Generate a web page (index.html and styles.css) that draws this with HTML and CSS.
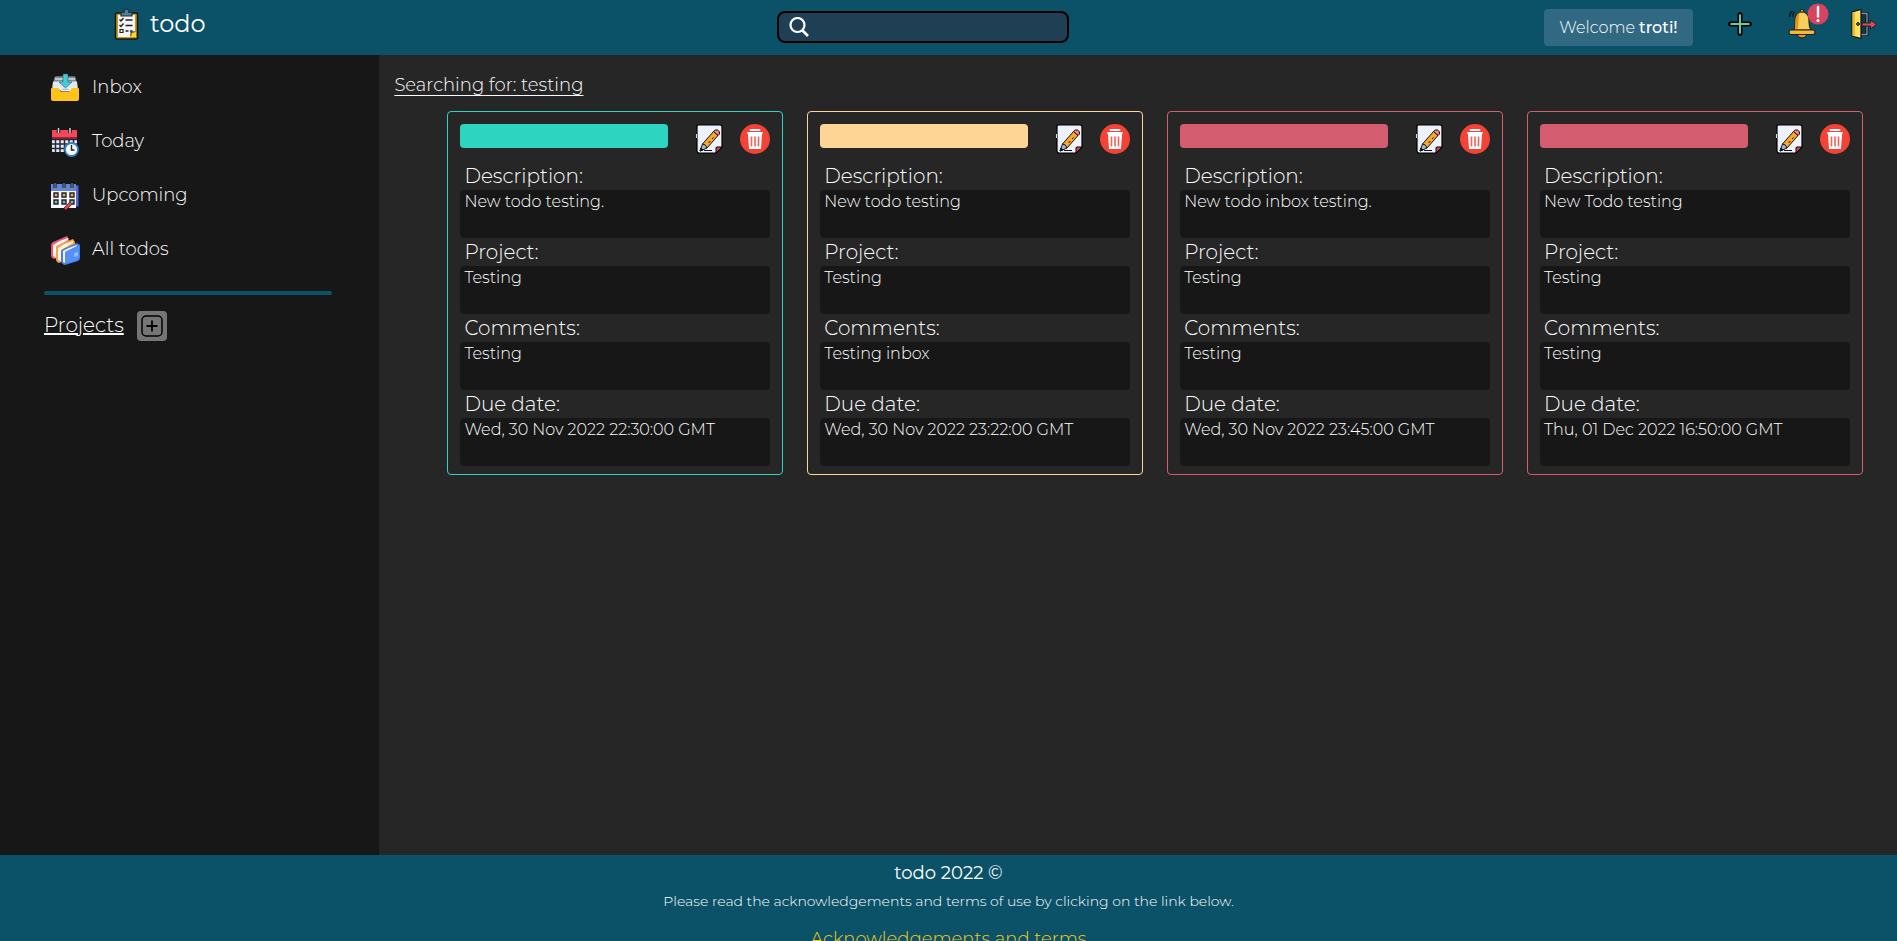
FILE: index.html
```html
<!DOCTYPE html>
<html lang="en">
<head>
<meta charset="utf-8">
<meta name="viewport" content="width=device-width, initial-scale=1">
<title>todo</title>
<link rel="stylesheet" href="styles.css">
</head>
<body>
<svg class="sprite" aria-hidden="true">
  <symbol id="edit" viewBox="0 0 30 30">
    <path d="M4 1h22q2 0 2 2v20l-6 6H5q-2 0-2-2V2z" fill="#edf2fb" stroke="#000" stroke-width="1.2"/>
    <path d="M22 29v-5q0-1 1-1h5z" fill="#d9455f" stroke="#000" stroke-width="1"/>
    <path d="M2.500 10v4" stroke="#d5d5d5"/>
    <path d="M8.500 20L19.500 7.500l4.500 4L13 24z" fill="#f9a72b" stroke="#111" stroke-width="1"/>
    <path d="M19.500 7.500q2-2.500 4-1.500 3 1.500 2 4L24 11.500z" fill="#fb7f85" stroke="#111" stroke-width="1"/>
    <path d="M8.500 20l-2.500 7 7-3q-1-4-4.500-4z" fill="#a9b4c6" stroke="#111" stroke-width="1"/>
    <path d="M6 27l1-3 2 2z" fill="#111" stroke="#111"/>
    <path d="M10 26.500h8M14.500 19l2-2M18 15l1.500-1.500" stroke="#111" stroke-width="1"/>
  </symbol>
  <symbol id="trash" viewBox="0 0 30 30">
    <circle cx="15" cy="15" r="15" fill="#f44336"/>
    <path d="M10.500 6h9M8 9h14" stroke="#fff" stroke-width="1.800" stroke-linecap="round"/>
    <path d="M8 10h14l-1 15H9z" fill="#fff"/>
    <path d="M11.500 12.500v10M15 12.500v10M18.500 12.500v10" stroke="#f1665c" stroke-width="1.600"/>
  </symbol>
</svg>

<header class="topbar">
  <a class="brand" href="#">
    <svg width="26" height="32" viewBox="0 0 26 32" aria-hidden="true">
      <rect x="1.500" y="5" width="22" height="26" rx="1.500" fill="#c99712" stroke="#161616" stroke-width="1.500"/>
      <path d="M4 7h17v16l-5 6H4z" fill="#f5f5f8"/>
      <path d="M17 29v-5h5z" fill="#ffd52b" stroke="#222"/>
      <path d="M16 29h6v-6z" fill="#ffd52b"/>
      <path d="M7 8V4.500h3Q10 1 12.500 1T15 4.500h3V8z" fill="#557b97" stroke="#1d2f3d" stroke-width="1.200"/>
      <path d="M5.500 11.500l1.500 1.500 2.500-3M11.500 12h7M5.500 17l1.500 1.500 2.500-3M11.500 17.500h7M11.500 23h3M16 23h2.500" fill="none" stroke="#222" stroke-width="1.400"/>
      <path d="M6 21.500h3v3H6z" fill="none" stroke="#222" stroke-width="1.200"/>
    </svg>
    <span>todo</span>
  </a>
  <form class="search" role="search">
    <svg width="20" height="20" viewBox="0 0 20 20" aria-hidden="true"><circle cx="8.500" cy="8" r="7" fill="none" stroke="#fff" stroke-width="2.200"/><path d="M13 13l6 6" stroke="#fff" stroke-width="2.600"/></svg>
    <input type="search" aria-label="Search todos">
  </form>
  <nav class="actions" aria-label="Account">
    <button class="welcome" type="button">Welcome <b>troti!</b></button>
    <button class="icon-button add" type="button" aria-label="Add todo">
      <svg width="24" height="24" viewBox="0 0 24 24"><path d="M12 2.500v19M2.500 12h19" stroke="#000" stroke-width="5" stroke-linecap="round"/><path d="M12 2.500v19M2.500 12h19" stroke="#69cba5" stroke-width="2"/></svg>
    </button>
    <button class="icon-button bell" type="button" aria-label="Notifications">
      <svg width="30" height="30" viewBox="0 0 30 30">
        <path d="M9 26q5 6 10 0" fill="#e99a18" stroke="#222"/>
        <path d="M6 21Q7 18 7 11q0-7 7-8.500 7 1.500 7 8.500 0 7 2 10z" fill="#f8cf5b" stroke="#222" stroke-width="1.200"/>
        <path d="M6.800 20.500Q7.500 17 7.500 11q0-5 4-7.500-1 5-1 9 0 5-1 8z" fill="#e8950f"/>
        <circle cx="14" cy="1.800" r="1.500" fill="#f2a51a" stroke="#222"/>
        <rect x="1" y="21" width="26" height="4.500" rx="2" fill="#f5b838" stroke="#222" stroke-width="1.200"/>
        <path d="M1.500 8q0-4 3-6M4.500 8q0-3 2-5" fill="none" stroke="#111" stroke-width="1.200"/>
      </svg>
      <span class="badge"><svg width="22" height="22" viewBox="0 0 22 22"><circle cx="11" cy="11" r="10.500" fill="#d9435f"/><path d="M11 4v9.500" stroke="#fff" stroke-width="2.400" stroke-linecap="round"/><circle cx="11" cy="17.500" r="1.500" fill="#fff"/></svg></span>
    </button>
    <button class="icon-button" type="button" aria-label="Log out">
      <svg width="28" height="30" viewBox="0 0 28 30">
        <path d="M11 4.500h6v21h-6" fill="#0a3948" stroke="#111" stroke-width="3"/>
        <path d="M11 4.500h6v21h-6" fill="none" stroke="#8794a8" stroke-width="1.300"/>
        <path d="M2 3l9-2.500v29L2 27z" fill="#ffe264" stroke="#111" stroke-width="1.200"/>
        <path d="M2.500 3.500L5 3v24.500l-2.500-.8z" fill="#edb92f"/>
        <circle cx="8" cy="15" r="1.400" fill="#777" stroke="#111"/>
        <path d="M12 14h8.500v-3l6 4.500-6 4.500v-3H12z" fill="#df4964" stroke="#222"/>
      </svg>
    </button>
  </nav>
</header>

<div class="workspace">
  <aside class="sidebar">
    <nav class="filters" aria-label="Filters">
      <a href="#">
        <svg width="30" height="30" viewBox="0 0 30 30" aria-hidden="true">
          <path d="M4 5q0-2 2-2h18q2 0 2 2l1 6H3z" fill="#7e8b95" stroke="#111" stroke-width=".6"/>
          <path d="M3 8.500h24l1 8H2z" fill="#dfe8ef"/><path d="M5 6h20" stroke="#fff"/>
          <path d="M2 15h7l2 4h8l2-4h7q1 0 1 1v10q0 2-2 2H3q-2 0-2-2V16q0-1 1-1z" fill="#ffc31a"/>
          <path d="M9 14l3 3.500h7l2-3" fill="none" stroke="#e9f1f6" stroke-width="2"/>
          <path d="M13 1h5v8h4l-6.500 6L9 9h4z" fill="#45cbdb" stroke="#154955" stroke-width=".5"/>
        </svg>
        <span>Inbox</span></a>
      <a href="#">
        <svg width="30" height="30" viewBox="0 0 30 30" aria-hidden="true">
          <rect x="2" y="3" width="25" height="22" rx="1" fill="#e8edf5"/>
          <path d="M2 11h25" stroke="#a32131" stroke-width="2"/><path d="M2 3h25v7H2z" fill="#f4485a"/>
          <path d="M2 12.500h25M2 17h25M2 21.500h25M5.500 12v13M10 12v13M14.500 12v13M19 12v10M23.500 12v6" stroke="#26263c" stroke-width="1.500"/>
          <path d="M8.500 1v5M20 1v5" stroke="#111" stroke-width="3.500"/><path d="M8.500 1v5M20 1v5" stroke="#ccd5df" stroke-width="1.500"/>
          <circle cx="21.500" cy="22.500" r="6.500" fill="#f6fbff" stroke="#377fc4" stroke-width="1.800"/>
          <path d="M21.500 18v5h3" fill="none" stroke="#222" stroke-width="1.400"/>
        </svg>
        <span>Today</span></a>
      <a href="#">
        <svg width="30" height="30" viewBox="0 0 30 30" aria-hidden="true">
          <path d="M25 4h4v22h-4z" fill="#5368c7" stroke="#15152c"/>
          <path d="M1 4h25v23H1z" fill="#f8faff"/><path d="M1 3h25v7H1z" fill="#6284db"/>
          <path d="M5 1v6M14 1v6M22 1v6" stroke="#111" stroke-width="3"/><path d="M5 2v5M14 2v5M22 2v5" stroke="#87a0b8" stroke-width="1"/>
          <g stroke="#222" stroke-width="1.400"><g fill="#f4a846"><path d="M4 12h4v4H4zM12 12h4v4h-4zM20 12h4v4h-4z"/></g><g fill="#69bac9"><path d="M4 19h4v4H4zM12 19h4v4h-4zM20 19h4v4h-4z"/></g></g>
          <path d="M15 28l6-6" stroke="#61151c" stroke-width="3.500"/><path d="M15 28l6-6" stroke="#ef4c50" stroke-width="2"/>
        </svg>
        <span>Upcoming</span></a>
      <a href="#">
        <svg width="30" height="30" viewBox="0 0 30 30" aria-hidden="true">
          <path d="M1 10q0-2 2-3L17 1l2 3v14L4 24q-3-1-3-4z" fill="#e75770"/><path d="M3 10q7-5 15-7v2L6 12v11l-3-2z" fill="#fff0f1"/>
          <path d="M6 13q0-2 2-3l15-6 2 3v14L9 28q-3-1-3-4z" fill="#f4a345"/><path d="M8 13q7-5 15-7v2l-12 7v11l-3-1z" fill="#fff2dc"/>
          <path d="M11 17q0-2 2-3l14-6 3 2v13q0 2-2 3l-13 4q-4-1-4-4z" fill="#477de9"/><path d="M13 16q7-4 14-6v1l-12 6v11l-2-1z" fill="#f2f6ff"/>
          <path d="M15 17l14-6v12q0 1-2 2l-12 4z" fill="#5590fa"/><path d="M24 18l4-1v4l-4 1z" fill="#91b7ff"/>
        </svg>
        <span>All todos</span></a>
    </nav>
    <hr class="divider">
    <div class="projects">
      <h2>Projects</h2>
      <button class="new-project" type="button" aria-label="Add project"><svg width="22" height="22" viewBox="0 0 22 22"><rect x="1" y="1" width="20" height="20" rx="4" fill="none" stroke="#000" stroke-width="1.500"/><path d="M11 5.500v11M5.500 11h11" stroke="#000" stroke-width="1.800"/></svg></button>
    </div>
  </aside>

  <main class="content">
    <h1>Searching for: testing</h1>
    <div class="cards">
      <article class="card low">
        <div class="card-head"><span class="priority"></span><button type="button" aria-label="Edit todo"><svg><use href="#edit"/></svg></button><button type="button" aria-label="Delete todo"><svg><use href="#trash"/></svg></button></div>
        <dl><dt>Description:</dt><dd>New todo testing.</dd><dt>Project:</dt><dd>Testing</dd><dt>Comments:</dt><dd>Testing</dd><dt>Due date:</dt><dd>Wed, 30 Nov 2022 22:30:00 GMT</dd></dl>
      </article>
      <article class="card medium">
        <div class="card-head"><span class="priority"></span><button type="button" aria-label="Edit todo"><svg><use href="#edit"/></svg></button><button type="button" aria-label="Delete todo"><svg><use href="#trash"/></svg></button></div>
        <dl><dt>Description:</dt><dd>New todo testing</dd><dt>Project:</dt><dd>Testing</dd><dt>Comments:</dt><dd>Testing inbox</dd><dt>Due date:</dt><dd>Wed, 30 Nov 2022 23:22:00 GMT</dd></dl>
      </article>
      <article class="card high">
        <div class="card-head"><span class="priority"></span><button type="button" aria-label="Edit todo"><svg><use href="#edit"/></svg></button><button type="button" aria-label="Delete todo"><svg><use href="#trash"/></svg></button></div>
        <dl><dt>Description:</dt><dd>New todo inbox testing.</dd><dt>Project:</dt><dd>Testing</dd><dt>Comments:</dt><dd>Testing</dd><dt>Due date:</dt><dd>Wed, 30 Nov 2022 23:45:00 GMT</dd></dl>
      </article>
      <article class="card high">
        <div class="card-head"><span class="priority"></span><button type="button" aria-label="Edit todo"><svg><use href="#edit"/></svg></button><button type="button" aria-label="Delete todo"><svg><use href="#trash"/></svg></button></div>
        <dl><dt>Description:</dt><dd>New Todo testing</dd><dt>Project:</dt><dd>Testing</dd><dt>Comments:</dt><dd>Testing</dd><dt>Due date:</dt><dd>Thu, 01 Dec 2022 16:50:00 GMT</dd></dl>
      </article>
    </div>
  </main>
</div>

<footer class="footer">
  <p class="copyright">todo 2022 ©</p>
  <p class="notice">Please read the acknowledgements and terms of use by clicking on the link below.</p>
  <a href="#">Acknowledgements and terms</a>
</footer>
</body>
</html>
```
FILE: styles.css
```css
* { box-sizing: border-box; }

body {
  margin: 0;
  height: 100vh;
  display: grid;
  grid-template-rows: 55px 85vh minmax(0, 1fr);
  background: #262626;
  color: #fff;
  font: 300 16px/24px Montserrat, Inter, sans-serif;
}

button {
  border: 0;
  padding: 0;
  background: none;
  color: inherit;
  font: inherit;
  cursor: pointer;
}

svg { display: block; }
.sprite { position: absolute; width: 0; height: 0; }
h1, h2, p, dl, dd { margin: 0; }

/* Top bar */
.topbar {
  display: grid;
  grid-template-columns: 1fr 292px 1fr;
  align-items: start;
  background: #0b5268;
}

.brand {
  display: flex;
  align-items: center;
  gap: 10px;
  padding: 8px 0 0 114px;
  color: #fff;
  font-size: 24px;
  font-weight: 400;
  line-height: 32px;
  text-decoration: none;
}

.search {
  display: flex;
  align-items: center;
  gap: 8px;
  height: 32px;
  margin: 11px 0 0 -26px;
  width: 292px;
  padding: 0 10px;
  border: 2px solid #000;
  border-radius: 8px;
  background: #1f3f55;
}

.search input {
  flex: 1;
  min-width: 0;
  border: 0;
  outline: 0;
  background: transparent;
  color: #fff;
  font: inherit;
}

.actions {
  display: flex;
  justify-content: flex-end;
  align-items: flex-start;
  padding: 9px 19px 0 0;
}

.welcome {
  width: 149px;
  height: 37px;
  border-radius: 4px;
  background: #316983;
}

.welcome b { font-weight: 500; }
.add { margin: 3px 36px 0 35px; }
.bell { position: relative; margin-right: 32px; }
.badge { position: absolute; top: -6px; right: -11px; }

/* Sidebar */
.workspace {
  display: grid;
  grid-template-columns: 20% minmax(0, 1fr);
}

.sidebar {
  padding: 18px 47px 0 44px;
  background: #171717;
}

.filters {
  display: grid;
  gap: 24px;
  padding-left: 6px;
}

.filters a {
  display: flex;
  align-items: flex-start;
  gap: 12px;
  color: #fff;
  font-size: 18px;
  line-height: 28px;
  text-decoration: none;
}

.divider {
  height: 4px;
  margin: 26px 0 16px;
  border: 0;
  border-radius: 2px;
  background: #0b5268;
}

.projects {
  display: flex;
  gap: 13px;
}

.projects h2 {
  font-size: 20px;
  font-weight: 300;
  line-height: 28px;
  text-decoration: underline;
}

.new-project {
  display: grid;
  place-items: center;
  width: 30px;
  height: 30px;
  border-radius: 4px;
  background: #757575;
}

/* Search results */
.content { padding: 16px 34px 0 15px; }

.content h1 {
  font-size: 18px;
  font-weight: 300;
  line-height: 28px;
  text-decoration: underline;
  text-underline-offset: 4px;
}

.cards {
  display: grid;
  grid-template-columns: repeat(4, minmax(0, 1fr));
  gap: 24px;
  padding: 12px 0 0 53px;
}

.card {
  padding: 12px 12px 8px;
  border: 1px solid var(--level);
  border-radius: 4px;
}

.low { --level: #2dd4bf; }
.medium { --level: #ffd596; }
.high { --level: #d45d6f; }

.card-head {
  display: flex;
  gap: 16px;
  margin-bottom: 8px;
}

.priority {
  flex: 1;
  height: 24px;
  margin-right: 10px;
  border-radius: 4px;
  background: var(--level);
}

.card-head svg { width: 30px; height: 30px; }

.card dt {
  padding-left: 4px;
  font-size: 20px;
  line-height: 28px;
}

.card dd {
  height: 48px;
  padding-left: 4px;
  border-radius: 4px;
  background: #171717;
}

/* Footer */
.footer {
  display: flex;
  flex-direction: column;
  align-items: center;
  padding-top: 6px;
  overflow: auto;
  scrollbar-width: none;
  background: #0b5268;
}

.copyright { font-size: 18px; font-weight: 400; }
.notice { margin-top: 4px; font-size: 14px; }
.footer a {
  margin-top: 14px;
  color: #facc15;
  font-size: 18px;
  text-decoration: none;
}
```
